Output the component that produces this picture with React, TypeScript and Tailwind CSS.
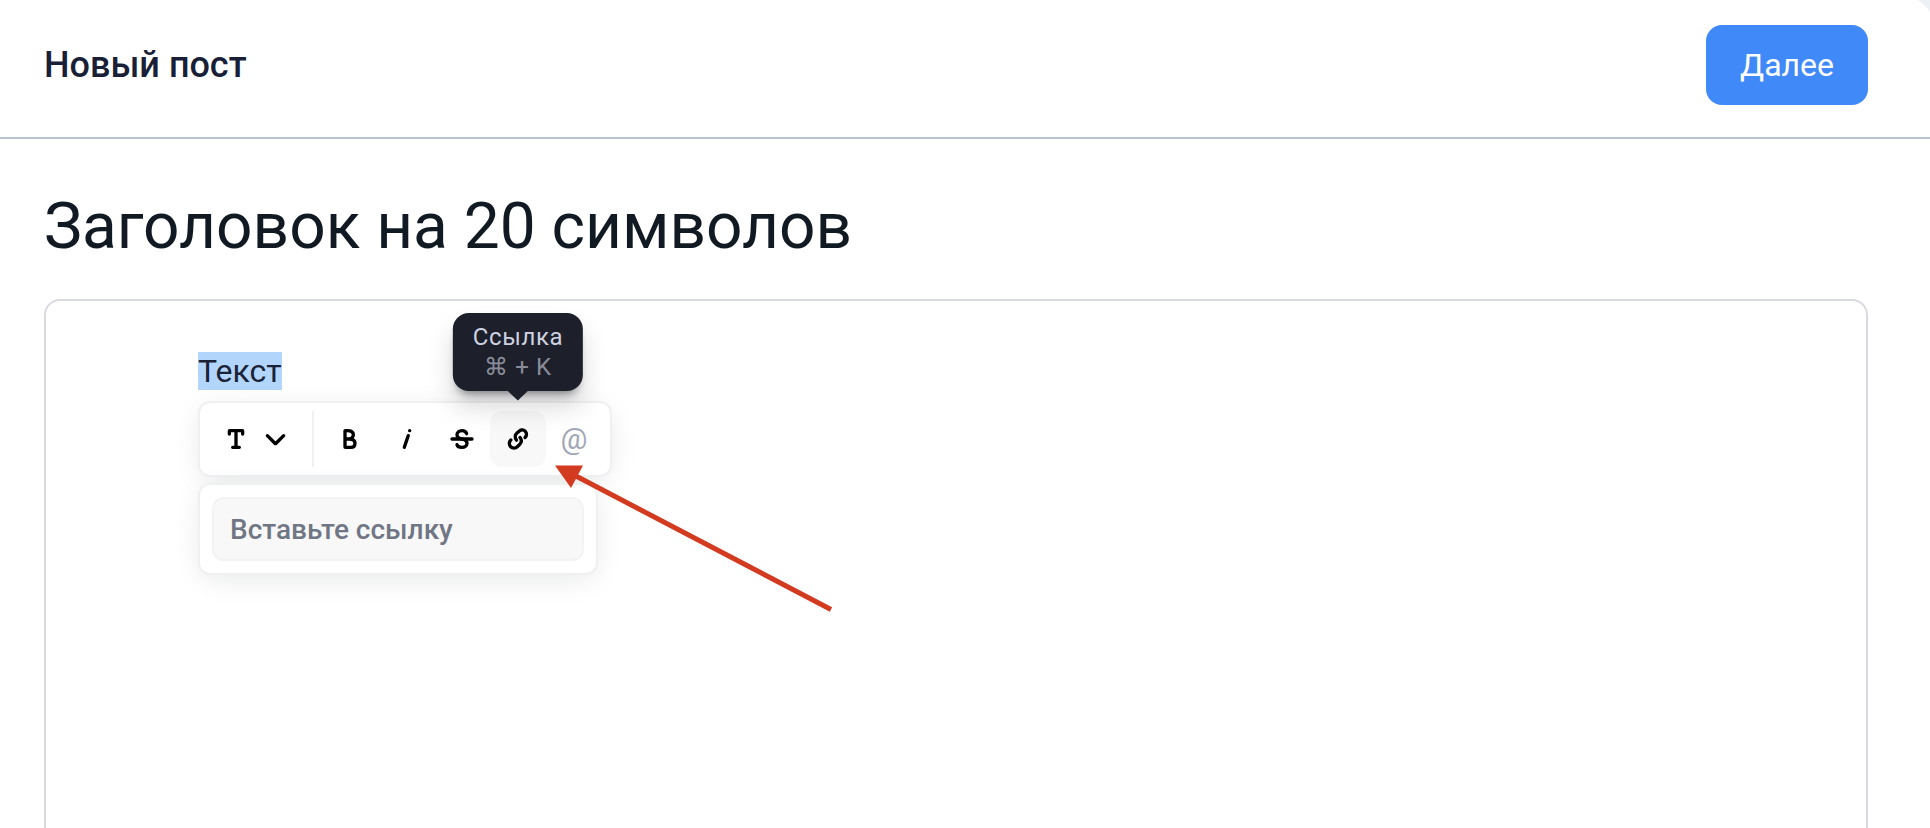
import React, { useState } from 'react';

interface IconProps {
  children: React.ReactNode;
}

const Icon: React.FC<IconProps> = ({ children }) => (
  <svg
    width="40"
    height="40"
    viewBox="0 0 24 24"
    fill="none"
    stroke="currentColor"
    strokeWidth="2"
    strokeLinecap="round"
    aria-hidden="true"
  >
    {children}
  </svg>
);

interface ToolButtonProps {
  label: string;
  active?: boolean;
  onClick?: () => void;
  children: React.ReactNode;
}

const ToolButton: React.FC<ToolButtonProps> = ({ label, active, onClick, children }) => (
  <button
    type="button"
    aria-label={label}
    onClick={onClick}
    className={`flex size-14 items-center justify-center rounded-xl text-black ${
      active ? 'bg-[#f8f8f8]' : ''
    }`}
  >
    {children}
  </button>
);

const Tooltip: React.FC = () => (
  <div
    role="tooltip"
    className="absolute bottom-full left-1/2 mb-5 -translate-x-1/2 rounded-2xl bg-[#1d202b] px-5 py-3 text-center text-2xl leading-6 tracking-wide whitespace-nowrap text-[#cdd1e0] shadow-[0_16px_24px_rgba(29,32,43,0.17),0_8px_10px_-6px_rgba(5,6,12,0.49)]"
  >
    <div>Ссылка</div>
    <div className="mt-1.5 text-[#898c98]">⌘ + K</div>
    <svg
      className="absolute top-full left-1/2 -translate-x-1/2"
      width="20"
      height="10"
      viewBox="0 0 20 10"
      aria-hidden="true"
    >
      <path d="M0 0H20L10 9.5Z" fill="#1d202b" />
    </svg>
  </div>
);

const InlineToolbar: React.FC = () => {
  const [linkOpen, setLinkOpen] = useState(true);

  return (
    <div className="relative mt-[11px] flex flex-col items-start gap-1.5">
      <div className="flex rounded-xl border-2 border-[#eff0f1] bg-white p-2 shadow-[0_6px_30px_-6px_rgba(13,20,33,0.13)]">
        <button type="button" aria-label="Преобразовать" className="flex h-14 items-center px-2 text-black">
          <Icon>
            <path d="M8 9V7.2C8 7.09 8.09 7 8.2 7H12M16 9V7.2C16 7.09 15.91 7 15.8 7H12M12 7V17M12 17H10M12 17H14" />
          </Icon>
          <Icon>
            <path d="M6.8 10L11.5 14.7C11.6 14.8 11.8 14.8 11.9 14.7L16.6 10" />
          </Icon>
        </button>
        <div className="mx-2 w-0.5 bg-[#eff0f1]" />
        <ToolButton label="Жирный">
          <Icon>
            <path d="M9 12V7.1C9 7.04 9.04 7 9.1 7H10.4C11.5 7 14 7.1 14 9.5C14 9.5 14 12 11 12M9 12V16.8C9 16.91 9.09 17 9.2 17H12.5C14 17 15 16 15 14.5C15 11.7 11 12 11 12M9 12H11" />
          </Icon>
        </ToolButton>
        <ToolButton label="Курсив">
          <Icon>
            <path d="M13.34 10C12.42 12.73 11 17 11 17M14.21 7H14.2" />
          </Icon>
        </ToolButton>
        <ToolButton label="Зачёркнутый">
          <Icon>
            <path d="M6 12H18" />
            <path d="M14.8 8.8C14.4 7.7 13.4 7 12 7C10.3 7 9 8 9 9.5C9 11 10.2 11.7 12 12C13.9 12.3 15 13.1 15 14.5C15 16 13.7 17 11.9 17C10.4 17 9.3 16.4 9 15.4" />
          </Icon>
        </ToolButton>
        <div className="relative">
          <ToolButton label="Ссылка" active={linkOpen} onClick={() => setLinkOpen(!linkOpen)}>
            <Icon>
              <path d="M7.7 12.6L7.68 12.62C6.54 13.7 6.52 15.52 7.64 16.63C8.72 17.71 10.48 17.71 11.57 16.63L13.03 15.19C14.07 14.16 14.21 12.53 13.37 11.33L13.22 11.12" />
              <path d="M16.22 11.12L16.36 10.98C17.29 10.03 17.35 8.52 16.49 7.5C15.57 6.4 13.93 6.25 12.83 7.17L11.39 8.38C10.09 9.47 9.96 11.42 11.09 12.67" />
            </Icon>
          </ToolButton>
          <Tooltip />
        </div>
        <button
          type="button"
          className="flex size-14 items-center justify-center rounded-xl text-[30px] leading-8 text-[#a1a7b6]"
        >
          @
        </button>
      </div>

      {linkOpen && (
        <div className="w-[400px] rounded-xl border-2 border-[#eff0f1] bg-white p-3 shadow-[0_6px_30px_-6px_rgba(13,20,33,0.13)]">
          <input
            type="text"
            aria-label="Вставьте ссылку"
            placeholder="Вставьте ссылку"
            className="block h-16 w-full rounded-xl border-2 border-[#f3f3f3] bg-[#f8f8f8] px-4 text-[28px] font-medium outline-none placeholder:text-[#707684]"
          />
        </div>
      )}

      {/* Red pointer to the link button */}
      <svg
        className="pointer-events-none absolute top-15 left-[350px]"
        width="290"
        height="155"
        viewBox="0 0 290 155"
        aria-hidden="true"
      >
        <path d="M26 14L283 148.5" stroke="#d23b20" strokeWidth="5" />
        <path d="M7 4.5H35L23 27Z" fill="#d23b20" />
      </svg>
    </div>
  );
};

export default function App() {
  return (
    <div className="h-screen overflow-hidden bg-[#edf1f5] font-[Roboto,sans-serif]">
      <div className="-mt-1 -mr-1 box-content flex h-full flex-col rounded-tr-[32px] bg-white pt-1">
        <header className="flex items-center justify-between border-b-2 border-[#b8c4d0] pt-[25px] pr-[66px] pb-8 pl-11">
          <div className="text-4xl font-medium text-[#181f36]">Новый пост</div>
          <button type="button" className="h-20 rounded-2xl bg-[#3f8af8] px-[34px] text-[32px] text-white">
            Далее
          </button>
        </header>

        <main className="flex flex-1 flex-col pr-[66px] pl-11">
          <h1 className="mt-12 mb-8 text-[64px] leading-20 text-[#111a23]">Заголовок на 20 символов</h1>
          <section className="flex-1 rounded-t-2xl border-2 border-b-0 border-[#d9d9e0] px-[152px] pt-[51px]">
            <p className="text-[32px] leading-[38px] text-[#1a2236]">
              <mark className="inline-block bg-[#b2d5fb] text-inherit">Текст</mark>
            </p>
            <InlineToolbar />
          </section>
        </main>
      </div>
    </div>
  );
}
